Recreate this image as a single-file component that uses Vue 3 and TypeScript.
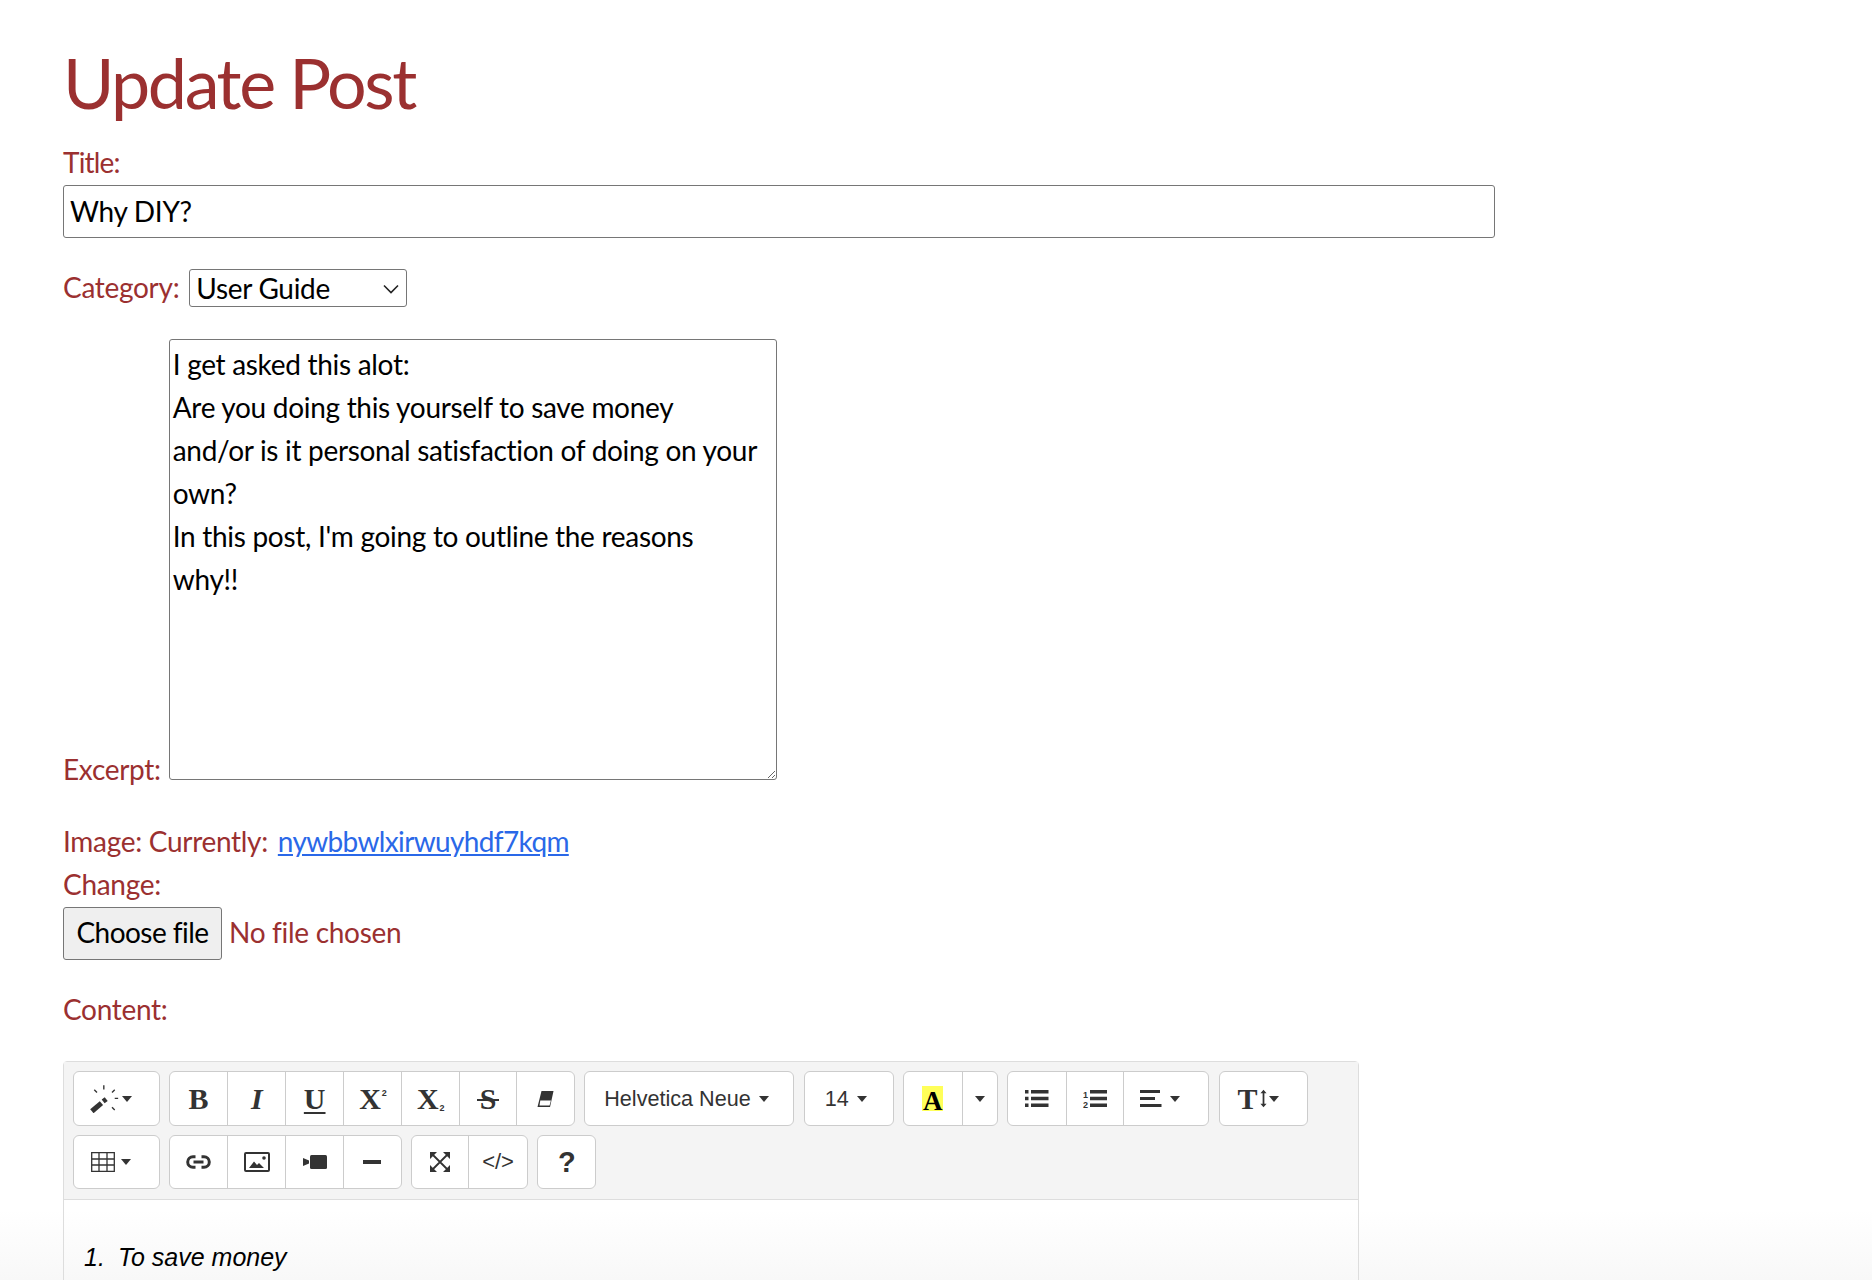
<script setup lang="ts">
const excerpt = `I get asked this alot:
Are you doing this yourself to save money
and/or is it personal satisfaction of doing on your
own?
In this post, I'm going to outline the reasons
why!!`
</script>

<template>
  <main class="page">
    <h1>Update Post</h1>
    <form class="form" @submit.prevent>
      <label class="block-label" for="t">Title:</label>
      <input id="t" class="title-input" type="text" value="Why DIY?" />
      <p class="row category">
        <label for="c">Category:</label>
        <span class="select-wrap">
          <select id="c" class="select"><option>User Guide</option></select>
          <svg class="chevron" width="16" height="10" viewBox="0 0 16 10"><path d="M1 1.500 8 8.500 15 1.500" fill="none" stroke="#222" stroke-width="1.600"/></svg>
        </span>
      </p>
      <p class="row excerpt">
        <label for="e">Excerpt:</label>
        <textarea id="e" class="textarea" :value="excerpt"></textarea>
      </p>
      <p class="row image">
        Image: Currently: <a href="#">nywbbwlxirwuyhdf7kqm</a><br />
        Change:
      </p>
      <div class="file">
        <button class="file-btn" type="button">Choose file</button>
        <span class="file-name">No file chosen</span>
      </div>
      <p class="row content">Content:</p>

      <section class="editor">
        <div class="toolbar">
          <div class="bar">
            <div class="group"><button class="btn w87 wand" type="button">
              <svg width="31" height="29" viewBox="85 40 90 85"><path d="M93 120 121 96" stroke="#333" stroke-width="15"/><path d="M126 91 135 84" stroke="#333" stroke-width="14"/><path d="M128 44v12M100 57l8 8M152 65l8-8M160 82h10M152 108l8 8" stroke="#333" stroke-width="4" fill="none"/></svg>
              <i class="caret"></i></button></div>
            <div class="group">
              <button class="btn w58 serif" type="button"><b>B</b></button>
              <button class="btn w58 serif" type="button"><b><em>I</em></b></button>
              <button class="btn w58 serif" type="button"><b class="u">U</b></button>
              <button class="btn w58 serif" type="button"><b>X<small class="sup">2</small></b></button>
              <button class="btn w58 serif" type="button"><b>X<small class="sub">2</small></b></button>
              <button class="btn w58 serif" type="button"><b class="s">S</b></button>
              <button class="btn w58" type="button">
                <svg width="19" height="18" viewBox="0 0 18 18"><path d="M5 1h12l-3.500 16H1z" fill="#333"/><path d="M3.800 10.500h10.600l-1.300 5H3z" fill="#fff"/></svg>
              </button>
            </div>
            <div class="group"><button class="btn w209 sans sans-l" type="button">Helvetica Neue <i class="caret"></i></button></div>
            <div class="group"><button class="btn w89 sans sans-l" type="button">14 <i class="caret"></i></button></div>
            <div class="group">
              <button class="btn w58 serif" type="button"><b class="hl">A</b></button>
              <button class="btn w36" type="button"><i class="caret"></i></button>
            </div>
            <div class="group">
              <button class="btn w58" type="button">
                <svg width="24" height="19" viewBox="0 0 24 19"><path d="M0 1h3.500v3.500H0zM0 7.800h3.500v3.500H0zM0 14.600h3.500v3.500H0zM6 1h17.500v3.500H6zM6 7.800h17.500v3.500H6zM6 14.600h17.500v3.500H6z" fill="#333"/></svg>
              </button>
              <button class="btn w58" type="button">
                <svg width="24" height="19" viewBox="0 0 24 19"><path d="M7 1h17v3.500H7zM7 7.800h17v3.500H7zM7 14.600h17v3.500H7z" fill="#333"/><text x="0" y="9" class="tiny">1</text><text x="0" y="18.500" class="tiny">2</text></svg>
              </button>
              <button class="btn w86 pad-r2" type="button">
                <svg width="22" height="17" viewBox="0 0 22 17"><path d="M0 0h20v3H0zM0 7h15v3H0zM0 14h21.500v3H0z" fill="#333"/></svg>
                <i class="caret"></i>
              </button>
            </div>
            <div class="group"><button class="btn w88 serif tight" type="button"><b class="big-t">T</b>
              <svg width="7" height="19" viewBox="0 0 8 20"><path d="M4 0 7.500 4h-2.500v12h2.500L4 20 .5 16H3V4H.5z" fill="#333"/></svg>
              <i class="caret"></i></button></div>
          </div>
          <div class="bar">
            <div class="group"><button class="btn w87 pad-r" type="button">
              <svg width="24" height="20" viewBox="0 0 24 20"><path d="M.7.7h22.600v18.600H.7zM8 .7v18.600M16 .7v18.600M.7 7h22.600M.7 13h22.600" fill="none" stroke="#333" stroke-width="1.300"/></svg>
              <i class="caret"></i></button></div>
            <div class="group">
              <button class="btn w58" type="button">
                <svg width="25" height="14" viewBox="0 0 25 14"><path d="M9.500 1.700H7a5.300 5.300 0 0 0 0 10.600h2.500M15.500 1.700H18a5.300 5.300 0 0 1 0 10.600h-2.500M7.500 7h10" fill="none" stroke="#333" stroke-width="3"/></svg>
              </button>
              <button class="btn w58" type="button">
                <svg width="26" height="20" viewBox="0 0 26 20"><rect x="1" y="1" width="24" height="18" rx="1" fill="none" stroke="#333" stroke-width="2"/><path d="M5 16 10 9.500l3 3.500 2-2 5 5z" fill="#333"/><circle cx="20" cy="6" r="1.800" fill="#333"/></svg>
              </button>
              <button class="btn w58" type="button">
                <svg width="24" height="14" viewBox="0 0 24 14"><path d="M0 3l6 2.500v3L0 11z" fill="#333"/><rect x="7" y="0" width="17" height="14" rx="1.500" fill="#333"/></svg>
              </button>
              <button class="btn w58" type="button"><i class="minus"></i></button>
            </div>
            <div class="group">
              <button class="btn w57" type="button">
                <svg width="20" height="20" viewBox="0 0 20 20"><path d="M3 3 17 17M17 3 3 17" stroke="#333" stroke-width="1.800"/><path d="M0 0h7L0 7zM20 0h-7l7 7zM0 20h7l-7-7zM20 20h-7l7-7z" fill="#333"/></svg>
              </button>
              <button class="btn w60 code" type="button">&lt;/&gt;</button>
            </div>
            <div class="group"><button class="btn w59 help" type="button">?</button></div>
          </div>
        </div>
        <div class="body">
          <ol><li><em><span class="num">1.</span>To save money</em></li></ol>
        </div>
      </section>
    </form>
    <div class="fade"></div>
  </main>
</template>

<style scoped>
.page {
  height: 1280px;
  overflow: hidden;
  position: relative;
  box-sizing: border-box;
  padding: 0 63px;
  font-family: Lato, "Open Sans", sans-serif;
  font-weight: 400;
  font-size: 28px;
  letter-spacing: -0.3px;
  line-height: 43px;
  color: #9b3030;
  background: #fff;
}
.form { position: relative; z-index: 1; }
h1 {
  margin: 0 0 17px;
  padding-top: 39px;
  font-size: 70px;
  line-height: 86px;
  font-weight: 400;
  letter-spacing: -2.400px;
}
.block-label { display: block; height: 43px; line-height: 41px; letter-spacing: -0.8px; }
.title-input {
  display: block;
  box-sizing: border-box;
  width: 1432px;
  height: 53px;
  padding: 0 6px 2px;
  border: 1px solid #767676;
  border-radius: 3px;
  font: 400 28px Lato, sans-serif;
  letter-spacing: -0.3px;
  color: #000;
  background: #fff;
}
.row { margin: 0; }
.category { margin-top: 28px; height: 43px; display: flex; align-items: center; gap: 10px; }
.select-wrap { position: relative; display: block; height: 38px; }
.select {
  display: block;
  box-sizing: border-box;
  width: 218px;
  height: 38px;
  padding: 0 6px;
  border: 1px solid #767676;
  border-radius: 3px;
  appearance: none;
  font: 400 28px Lato, sans-serif;
  letter-spacing: -0.3px;
  color: #000;
  background: #fff;
}
.chevron { position: absolute; right: 8px; top: 15px; pointer-events: none; }
.excerpt { margin-top: 30px; }
.textarea {
  box-sizing: border-box;
  width: 608px;
  height: 441px;
  margin-left: 8px;
  padding: 3px 3px 5px;
  border: 1px solid #767676;
  border-radius: 3px;
  font: 400 28px/43px Lato, sans-serif;
  letter-spacing: -0.3px;
  color: #000;
  background: #fff;
  vertical-align: baseline;
}
.image { margin-top: 29px; }
.image a { color: #2a68e8; letter-spacing: -0.65px; margin-left: 3px; }
.file { display: flex; align-items: center; gap: 7px; height: 53px; margin-top: 1px; }
.file-name { padding-bottom: 2px; }
.file-btn {
  box-sizing: border-box;
  width: 159px;
  height: 53px;
  padding: 0 0 3px;
  border: 1px solid #767676;
  border-radius: 3px;
  background: #efefef;
  color: #000;
  font: 400 28px Lato, sans-serif;
  letter-spacing: -0.55px;
}
.content { margin-top: 28px; }
.editor {
  width: 1296px;
  box-sizing: border-box;
  margin-top: 30px;
  border: 1px solid #ddd;
  border-radius: 4px 4px 0 0;
  height: 300px;
  letter-spacing: 0;
}
.toolbar {
  display: flex;
  flex-direction: column;
  gap: 9px;
  padding: 9px 9px 10px;
  background: #f4f4f4;
  border-bottom: 1px solid #ddd;
}
.bar { display: flex; gap: 9.200px; height: 55px; }
.bar + .bar { height: 54px; }
.group {
  display: flex;
  background: #fff;
  border: 1px solid #ccc;
  border-radius: 6px;
}
.btn {
  display: flex;
  align-items: center;
  justify-content: center;
  gap: 5px;
  height: 100%;
  padding: 0;
  border: 0;
  background: none;
  color: #333;
  font-weight: 400;
}
.btn + .btn { border-left: 1px solid #ccc; }
.pad-r { padding-right: 10px; gap: 6px; }
.wand { padding-right: 12px; gap: 2px; }
.pad-r2 { padding-right: 12px; gap: 8px; }
.tight { padding-right: 10px; gap: 2px; }
.w36 { width: 35px; }
.w57 { width: 56px; }
.w58 { width: 57.800px; }
.w59 { width: 57px; }
.w60 { width: 59px; }
.w86 { width: 85px; }
.w87 { width: 84.500px; }
.w88 { width: 87px; }
.w89 { width: 88px; }
.w209 { width: 208px; }
.serif { font: 400 30px "Liberation Serif", serif; }
.serif small { font: 700 9px "Liberation Sans", sans-serif; }
.sup { position: relative; top: -13px; left: 1px; }
.sub { position: relative; top: 2px; left: 1px; }
.u { text-decoration: underline; text-decoration-thickness: 1.500px; text-underline-offset: 3px; }
.s { position: relative; }
.s::after {
  content: "";
  position: absolute;
  left: -3px;
  right: -3px;
  top: 50%;
  height: 2px;
  background: #333;
}
.hl {
  display: block;
  box-sizing: border-box;
  width: 21px;
  height: 25px;
  padding-top: 6px;
  line-height: 19px;
  font-size: 27px;
  text-align: center;
  background: #ffff59;
  color: #000;
  overflow: visible;
  white-space: nowrap;
}
.big-t { font-size: 30px; }
.sans { font: 400 21.600px "Liberation Sans", sans-serif; gap: 8px; }
.sans-l { padding-right: 6px; }
.code { font: 400 22px "Liberation Sans", sans-serif; }
.help { font: 700 29px "Liberation Sans", sans-serif; }
.tiny { font: 700 9px "Liberation Sans", sans-serif; fill: #333; }
.caret {
  display: block;
  width: 0;
  height: 0;
  border-left: 5.500px solid transparent;
  border-right: 5.500px solid transparent;
  border-top: 6.500px solid #333;
}
.minus { display: block; width: 18px; height: 4px; background: #333; }
.body {
  font: 400 25px/33px "Liberation Sans", sans-serif;
  color: #000;
  padding: 41px 0 0 20px;
}
.body ol { margin: 0; padding: 0; list-style: none; }
.num { display: inline-block; width: 34px; }
.fade {
  position: absolute;
  left: 0;
  right: 0;
  bottom: 0;
  height: 70px;
  background: linear-gradient(to bottom, #fff, #f8f8f8);
  pointer-events: none;
}
</style>
<style>
html, body { margin: 0; overflow: hidden; }
</style>
